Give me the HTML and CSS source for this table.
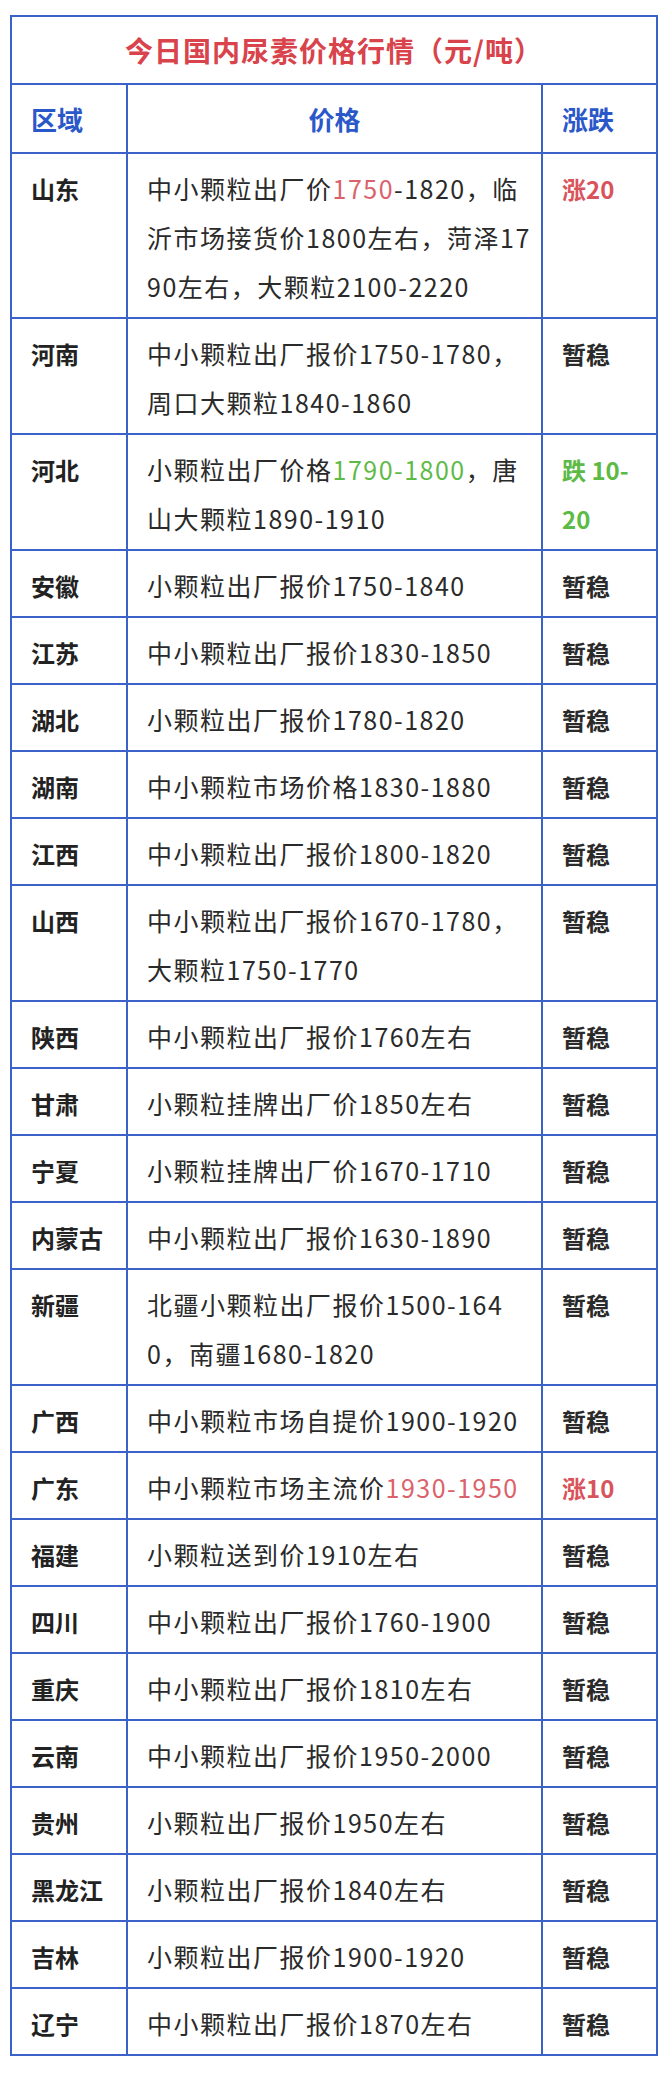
FILE: index.html
```html
<!DOCTYPE html>
<html lang="zh-CN">
<head>
<meta charset="utf-8">
<title>今日国内尿素价格行情</title>
<link rel="stylesheet" href="styles.css">
</head>
<body>
<table class="price-table">
  <colgroup>
    <col class="c-region">
    <col class="c-price">
    <col class="c-change">
  </colgroup>
  <thead>
    <tr><th class="title" colspan="3">今日国内尿素价格行情（元/吨）</th></tr>
    <tr class="head">
      <th class="h-left">区域</th>
      <th class="h-center">价格</th>
      <th class="h-left">涨跌</th>
    </tr>
  </thead>
  <tbody>
    <tr><td class="region">山东</td><td class="price">中小颗粒出厂价<span class="up">1750</span>-1820，临<br>沂市场接货价1800左右，菏泽17<br>90左右，大颗粒2100-2220</td><td class="chg up">涨20</td></tr>
    <tr><td class="region">河南</td><td class="price">中小颗粒出厂报价1750-1780，<br>周口大颗粒1840-1860</td><td class="chg">暂稳</td></tr>
    <tr><td class="region">河北</td><td class="price">小颗粒出厂价格<span class="down">1790-1800</span>，唐<br>山大颗粒1890-1910</td><td class="chg down">跌 10-<br>20</td></tr>
    <tr><td class="region">安徽</td><td class="price">小颗粒出厂报价1750-1840</td><td class="chg">暂稳</td></tr>
    <tr><td class="region">江苏</td><td class="price">中小颗粒出厂报价1830-1850</td><td class="chg">暂稳</td></tr>
    <tr><td class="region">湖北</td><td class="price">小颗粒出厂报价1780-1820</td><td class="chg">暂稳</td></tr>
    <tr><td class="region">湖南</td><td class="price">中小颗粒市场价格1830-1880</td><td class="chg">暂稳</td></tr>
    <tr><td class="region">江西</td><td class="price">中小颗粒出厂报价1800-1820</td><td class="chg">暂稳</td></tr>
    <tr><td class="region">山西</td><td class="price">中小颗粒出厂报价1670-1780，<br>大颗粒1750-1770</td><td class="chg">暂稳</td></tr>
    <tr><td class="region">陕西</td><td class="price">中小颗粒出厂报价1760左右</td><td class="chg">暂稳</td></tr>
    <tr><td class="region">甘肃</td><td class="price">小颗粒挂牌出厂价1850左右</td><td class="chg">暂稳</td></tr>
    <tr><td class="region">宁夏</td><td class="price">小颗粒挂牌出厂价1670-1710</td><td class="chg">暂稳</td></tr>
    <tr><td class="region">内蒙古</td><td class="price">中小颗粒出厂报价1630-1890</td><td class="chg">暂稳</td></tr>
    <tr><td class="region">新疆</td><td class="price">北疆小颗粒出厂报价1500-164<br>0，南疆1680-1820</td><td class="chg">暂稳</td></tr>
    <tr><td class="region">广西</td><td class="price">中小颗粒市场自提价1900-1920</td><td class="chg">暂稳</td></tr>
    <tr><td class="region">广东</td><td class="price">中小颗粒市场主流价<span class="up">1930-1950</span></td><td class="chg up">涨10</td></tr>
    <tr><td class="region">福建</td><td class="price">小颗粒送到价1910左右</td><td class="chg">暂稳</td></tr>
    <tr><td class="region">四川</td><td class="price">中小颗粒出厂报价1760-1900</td><td class="chg">暂稳</td></tr>
    <tr><td class="region">重庆</td><td class="price">中小颗粒出厂报价1810左右</td><td class="chg">暂稳</td></tr>
    <tr><td class="region">云南</td><td class="price">中小颗粒出厂报价1950-2000</td><td class="chg">暂稳</td></tr>
    <tr><td class="region">贵州</td><td class="price">小颗粒出厂报价1950左右</td><td class="chg">暂稳</td></tr>
    <tr><td class="region">黑龙江</td><td class="price">小颗粒出厂报价1840左右</td><td class="chg">暂稳</td></tr>
    <tr><td class="region">吉林</td><td class="price">小颗粒出厂报价1900-1920</td><td class="chg">暂稳</td></tr>
    <tr><td class="region">辽宁</td><td class="price">中小颗粒出厂报价1870左右</td><td class="chg">暂稳</td></tr>
  </tbody>
</table>
</body>
</html>
```

FILE: styles.css
```css
html, body {
  margin: 0;
  padding: 0;
  background: #ffffff;
}

body {
  padding: 15px 0 0 10px;
  font-family: "Noto Sans CJK SC", "Noto Sans", sans-serif;
  color: #222222;
}

.price-table {
  width: 648px;
  border-collapse: separate;
  border-spacing: 0;
  border-top: 2px solid #3a62c8;
  border-left: 2px solid #3a62c8;
  table-layout: fixed;
}

.c-region { width: 116px; }
.c-price { width: 415px; }
.c-change { width: 115px; }

.price-table th,
.price-table td {
  border-right: 2px solid #3a62c8;
  border-bottom: 2px solid #3a62c8;
  vertical-align: top;
  text-align: left;
}

.title {
  height: 66px;
  padding: 0;
  vertical-align: middle !important;
  text-align: center !important;
  font-size: 28px;
  font-weight: 700;
  color: #d8434c;
  line-height: 66px;
  letter-spacing: 1px;
}

.head th {
  height: 67px;
  padding: 0 0 0 19px;
  vertical-align: middle;
  font-size: 26px;
  font-weight: 700;
  color: #2b58c8;
  line-height: 67px;
}

.head .h-center {
  text-align: center;
  padding: 0;
}

.price-table td {
  padding: 10px 0 6px 19px;
  line-height: 49px;
}

.region {
  font-size: 24px;
  font-weight: 700;
  color: #222222;
}

.price {
  font-size: 25px;
  letter-spacing: 1.5px;
  color: #2a2a2a;
  padding-right: 6px !important;
}

.chg {
  font-size: 24px;
  font-weight: 700;
  color: #2a2a2a;
}

.price .up { color: #db616a; }
.price .down { color: #5fbb48; }

.chg.up { color: #d9535b; }
.chg.down { color: #5cba45; }
```
